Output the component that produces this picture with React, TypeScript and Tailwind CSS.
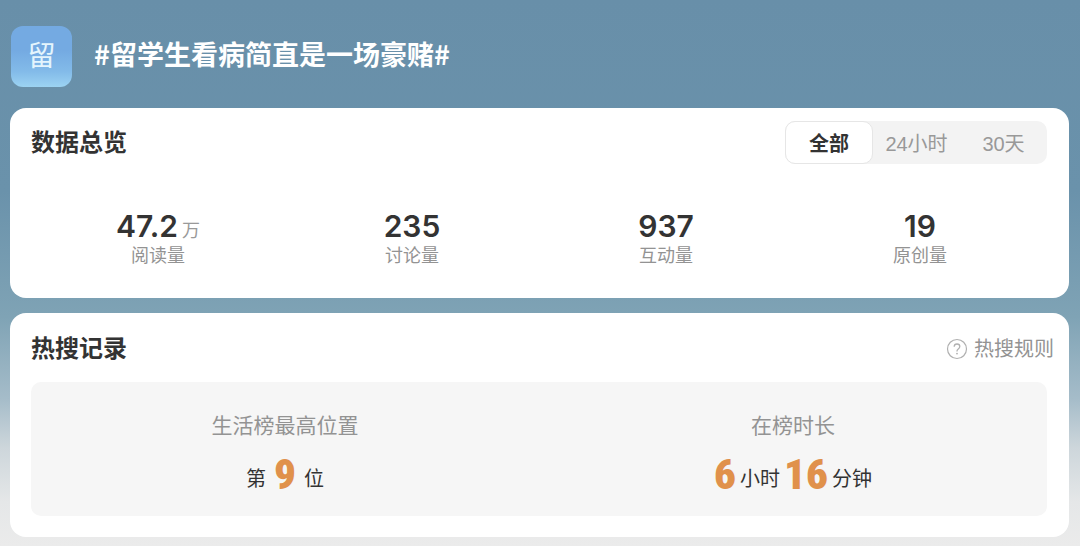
import React, { useState } from 'react';

interface Stat {
  label: string;
  value: string;
  unit?: string;
}

interface RecordPart {
  text: string;
  highlight?: boolean;
}

interface HotRecord {
  label: string;
  gap: string;
  parts: RecordPart[];
}

const RANGES = [
  { id: 'all', label: '全部' },
  { id: '24h', label: '24小时' },
  { id: '30d', label: '30天' },
];

const STATS: Stat[] = [
  { label: '阅读量', value: '47.2', unit: '万' },
  { label: '讨论量', value: '235' },
  { label: '互动量', value: '937' },
  { label: '原创量', value: '19' },
];

const RECORDS: HotRecord[] = [
  {
    label: '生活榜最高位置',
    gap: 'gap-2',
    parts: [{ text: '第' }, { text: '9', highlight: true }, { text: '位' }],
  },
  {
    label: '在榜时长',
    gap: 'gap-1',
    parts: [
      { text: '6', highlight: true },
      { text: '小时' },
      { text: '16', highlight: true },
      { text: '分钟' },
    ],
  },
];

const TopicAvatar: React.FC = () => (
  <div className="flex size-[61px] shrink-0 items-center justify-center rounded-xl bg-linear-to-b from-[#74aae2] from-40% via-[#83bbe9] via-75% to-[#9cd3f2]">
    <span className="text-[28px] leading-9 text-[#e4f5fd]">留</span>
  </div>
);

const RangeTabs: React.FC = () => {
  const [active, setActive] = useState('all');

  return (
    <div className="flex h-[43px] rounded-[10px] bg-[#f3f3f3]">
      {RANGES.map((range) => (
        <button
          key={range.id}
          type="button"
          aria-pressed={active === range.id}
          onClick={() => setActive(range.id)}
          className={
            active === range.id
              ? 'w-[88px] rounded-[10px] border border-[#e6e6e6] bg-white pt-0.5 text-xl font-bold text-[#333]'
              : 'w-[87px] rounded-[10px] pt-0.5 text-xl text-[#999]'
          }
        >
          {range.label}
        </button>
      ))}
    </div>
  );
};

const StatItem: React.FC<{ stat: Stat }> = ({ stat }) => (
  <div className="flex flex-col items-center">
    <dd className="order-1 flex items-baseline gap-1">
      <span className="font-['Inter','Liberation_Sans',sans-serif] text-[30px] leading-9 font-semibold text-[#333]">
        {stat.value}
      </span>
      {stat.unit && <span className="text-lg leading-none text-[#999]">{stat.unit}</span>}
    </dd>
    <dt className="order-2 text-lg leading-6 text-[#939393]">{stat.label}</dt>
  </div>
);

const RecordItem: React.FC<{ record: HotRecord }> = ({ record }) => (
  <div className="flex flex-col items-center gap-2">
    <dt className="text-[21px] leading-8 text-[#939393]">{record.label}</dt>
    <dd className={`flex items-end ${record.gap}`}>
      {record.parts.map((part) => (
        <span
          key={part.text}
          className={
            part.highlight
              ? "font-['Liberation_Sans_Narrow','Roboto_Condensed',sans-serif] text-[43px] leading-12 font-black text-[#e0914b]"
              : 'text-xl leading-[38px] text-[#333]'
          }
        >
          {part.text}
        </span>
      ))}
    </dd>
  </div>
);

const App: React.FC = () => {
  return (
    <main className="min-h-screen bg-[linear-gradient(to_bottom,#688fa9_0%,#6a92ab_35%,#7fa3b5_58%,#a5bcc9_73%,#cdd6db_82%,#e5e7e8_92%,#ebebeb_100%)] pr-[11px] pb-[9px] pl-2.5 font-['Liberation_Sans','Noto_Sans_CJK_SC',sans-serif]">
      <header className="flex items-center gap-[22px] pt-[26px] pb-[21px] pl-px">
        <TopicAvatar />
        <h1 className="pb-1.5 font-['Noto_Sans_CJK_SC',sans-serif] text-[27px] leading-9 font-bold text-white">
          #留学生看病简直是一场豪赌#
        </h1>
      </header>

      <section className="rounded-2xl bg-white pt-[13px] pr-[22px] pb-[30px] pl-[21px]">
        <div className="flex items-center justify-between">
          <h2 className="text-2xl font-bold text-[#333]">数据总览</h2>
          <RangeTabs />
        </div>
        <dl className="mt-11 grid grid-cols-4">
          {STATS.map((stat) => (
            <StatItem key={stat.label} stat={stat} />
          ))}
        </dl>
      </section>

      <section className="mt-[15px] rounded-2xl bg-white pt-5 pb-[21px] pl-[21px]">
        <div className="flex items-center justify-between pr-[15px]">
          <h2 className="text-2xl font-bold text-[#333]">热搜记录</h2>
          <a href="#rules" className="flex items-center gap-1.5 text-xl text-[#939393]">
            <svg className="size-[22px]" viewBox="0 0 22 22" fill="none" aria-hidden="true">
              <circle cx="11" cy="11" r="9.5" stroke="#b0b0b0" strokeWidth="1.2" />
              <path
                d="M8.2 8.8c0-1.7 1.2-2.8 2.8-2.8s2.8 1 2.8 2.5c0 1.2-.7 1.8-1.5 2.4-.8.6-1.3 1-1.3 2.1v.4"
                stroke="#b0b0b0"
                strokeWidth="1.3"
              />
              <circle cx="11" cy="15.6" r="0.9" fill="#b0b0b0" />
            </svg>
            热搜规则
          </a>
        </div>
        <dl className="mt-[17px] mr-[22px] grid grid-cols-2 rounded-[10px] bg-[#f6f6f6] pt-7 pb-[18px]">
          {RECORDS.map((record) => (
            <RecordItem key={record.label} record={record} />
          ))}
        </dl>
      </section>
    </main>
  );
};

export default App;
